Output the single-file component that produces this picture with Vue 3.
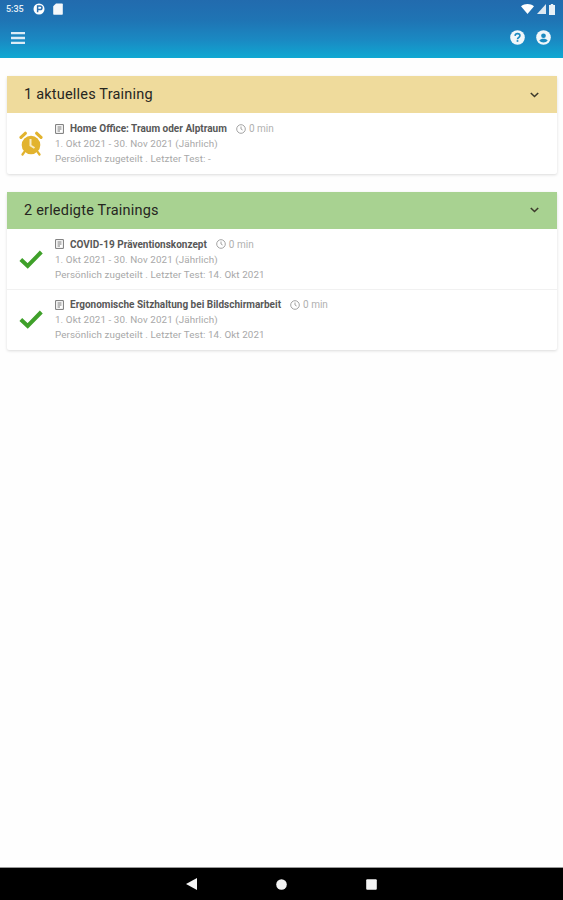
<template>
  <div class="screen">
    <header class="appbar">
      <div class="status">
        <div class="status-left">
          <span class="time">5:35</span>
          <svg class="st-icon" width="12" height="12" viewBox="0 0 12 12"><circle cx="6" cy="6" r="5.500" fill="#fff"/><path d="M4.600 9.200V3h2.600a1.700 1.700 0 0 1 0 3.600H5" fill="none" stroke="#2a70b0" stroke-width="1.500"/></svg>
          <svg class="st-icon" width="10" height="12" viewBox="0 0 10 12"><path d="M3 .5h6a.8.8 0 0 1 .8.8v9.600a.8.8 0 0 1-.8.8H1a.8.8 0 0 1-.8-.8V3.300z" fill="#f4f8fb"/></svg>
        </div>
        <div class="status-right">
          <svg width="13" height="10" viewBox="0 0 13 10"><path d="M0 2.200C3.600-.7 9.400-.7 13 2.200L6.500 10z" fill="#fff"/></svg>
          <svg width="9" height="10" viewBox="0 0 9 10"><path d="M9 0v10H0z" fill="#dfe9f2"/></svg>
          <svg width="6" height="11" viewBox="0 0 6 11"><path d="M1.800 0h2.400v1H6v10H0V1h1.800z" fill="#e9f1f7"/></svg>
        </div>
      </div>
      <div class="toolbar">
        <svg class="menu" width="14" height="12" viewBox="0 0 14 12"><path d="M0 1.200h14M0 6h14M0 10.800h14" stroke="#dcecf6" stroke-width="2.300"/></svg>
        <div class="actions">
          <svg width="15" height="15" viewBox="0 0 16 16">
            <circle cx="8" cy="8" r="7.800" fill="#f1f7fa"/>
            <path d="M5.400 6.200A2.600 2.600 0 0 1 8 3.900c1.500 0 2.600 1 2.600 2.200 0 1.900-2.600 1.900-2.600 3.700" fill="none" stroke="#1b8ac0" stroke-width="1.700"/>
            <rect x="7.100" y="10.800" width="1.800" height="1.800" fill="#1b8ac0"/>
          </svg>
          <svg width="15" height="15" viewBox="0 0 16 16">
            <circle cx="8" cy="8" r="7.800" fill="#f1f7fa"/>
            <circle cx="8" cy="6.100" r="2.500" fill="#1b8ac0"/>
            <path d="M3.500 11.200c1-1.500 2.600-2 4.500-2s3.500.5 4.500 2c-1 1.300-2.600 2-4.500 2s-3.500-.7-4.500-2z" fill="#1b8ac0"/>
          </svg>
        </div>
      </div>
    </header>

    <main class="content">
      <section v-for="group in groups" :key="group.title" class="card">
        <div class="card-head" :class="group.tone">
          <span>{{ group.title }}</span>
          <svg class="chevron" width="9" height="6" viewBox="0 0 9 6"><path d="M.8 1l3.700 3.500L8.200 1" fill="none" stroke="#3d3a2c" stroke-width="1.600"/></svg>
        </div>
        <div v-for="item in group.items" :key="item.name" class="row">
          <div class="status-icon">
            <svg v-if="group.tone === 'open'" width="24" height="25" viewBox="0 0 24 25">
              <circle cx="12" cy="14" r="9.300" fill="#e2b32e"/>
              <path d="M2 6.300 6.300 2.300M22 6.300l-4.300-4" stroke="#e2b32e" stroke-width="3.200" stroke-linecap="round"/>
              <path d="M5.300 21 3.500 23.500M18.700 21l1.800 2.500" stroke="#e2b32e" stroke-width="2.200" stroke-linecap="round"/>
              <path d="M11.500 8v6.500l4 2.500" fill="none" stroke="#f7ecc8" stroke-width="2"/>
            </svg>
            <svg v-else width="24" height="19" viewBox="0 0 24 19">
              <path d="M1.800 9.500 8.700 16 22.300 2" fill="none" stroke="#3fa02a" stroke-width="4"/>
            </svg>
          </div>
          <div class="details">
            <div class="title-line">
              <svg width="9" height="10" viewBox="0 0 9 10"><path d="M.6.600h7.800v8.800H.6zM2.500 3h4M2.500 5h4M2.500 7h2.500" fill="none" stroke="#777" stroke-width="1"/></svg>
              <strong>{{ item.name }}</strong>
              <span class="duration">
                <svg width="10" height="10" viewBox="0 0 10 10"><circle cx="5" cy="5" r="4.300" fill="none" stroke="#999" stroke-width=".9"/><path d="M5 2.500V5l1.600 1" fill="none" stroke="#999" stroke-width=".9"/></svg>
                0 min
              </span>
            </div>
            <div class="meta">1. Okt 2021 - 30. Nov 2021 (Jährlich)</div>
            <div class="meta">Persönlich zugeteilt . Letzter Test: {{ item.lastTest }}</div>
          </div>
        </div>
      </section>
    </main>

    <footer class="navbar">
      <svg width="11" height="12" viewBox="0 0 11 12"><path d="M11 0v12L0 6z" fill="#f4f4f4"/></svg>
      <svg width="11" height="11" viewBox="0 0 11 11"><circle cx="5.500" cy="5.500" r="5.300" fill="#f4f4f4"/></svg>
      <svg width="11" height="11" viewBox="0 0 11 11"><rect x=".2" y=".2" width="10.600" height="10.600" rx="1" fill="#f4f4f4"/></svg>
    </footer>
  </div>
</template>

<script setup>
const groups = [
  {
    title: '1 aktuelles Training',
    tone: 'open',
    items: [{ name: 'Home Office: Traum oder Alptraum', lastTest: '-' }]
  },
  {
    title: '2 erledigte Trainings',
    tone: 'done',
    items: [
      { name: 'COVID-19 Präventionskonzept', lastTest: '14. Okt 2021' },
      { name: 'Ergonomische Sitzhaltung bei Bildschirmarbeit', lastTest: '14. Okt 2021' }
    ]
  }
]
</script>

<style>
html, body { margin: 0; background: #fff; }
</style>

<style scoped>
.screen {
  width: 563px;
  height: 900px;
  display: flex;
  flex-direction: column;
  font-family: Roboto, "Liberation Sans", sans-serif;
  background: #fefefe;
  overflow: hidden;
}

.appbar {
  height: 58px;
  flex: none;
  box-sizing: border-box;
  background: linear-gradient(180deg, #226bae 0%, #1f74b4 35%, #1a8ac3 70%, #0fa8d2 100%);
}

.status {
  height: 18px;
  padding: 0 8px 0 6px;
  display: flex;
  justify-content: space-between;
  align-items: center;
}

.status-left, .status-right {
  display: flex;
  align-items: center;
}

.status-left { gap: 8px; }
.status-right { gap: 3px; }

.time {
  font-size: 9px;
  font-weight: 500;
  color: #e6f0f7;
  width: 19px;
}

.toolbar {
  height: 40px;
  padding: 0 12px 0 11px;
  display: flex;
  justify-content: space-between;
  align-items: center;
}

.menu { margin-bottom: 1px; }

.actions {
  display: flex;
  gap: 11px;
  margin-bottom: 1px;
}

.content {
  flex: 1;
  padding: 18px 6px 0 7px;
  display: flex;
  flex-direction: column;
  gap: 18px;
}

.card {
  background: #fff;
  border-radius: 2px;
  box-shadow: 0 1px 3px rgba(0, 0, 0, 0.14);
}

.card-head {
  height: 37px;
  padding: 0 18px 0 17px;
  display: flex;
  justify-content: space-between;
  align-items: center;
  font-size: 14.500px;
  letter-spacing: 0.2px;
  color: #26261f;
}

.card-head.open { background: #efdb9c; }
.card-head.done { background: #a8d291; }

.row {
  height: 60.500px;
  box-sizing: border-box;
  padding: 8px 0 0 12px;
  display: flex;
}

.row + .row {
  padding-top: 7px;
  border-top: 1px solid #f1f1f1;
}

.status-icon {
  width: 36px;
  height: 45px;
  flex: none;
  display: flex;
  align-items: center;
  justify-content: flex-start;
}

.details {
  font-size: 9.800px;
  line-height: 15px;
  color: #a8a8a8;
}

.title-line {
  display: flex;
  align-items: center;
  gap: 6px;
}

.title-line strong {
  font-size: 10px;
  font-weight: 700;
  color: #585858;
}

.duration {
  display: flex;
  align-items: center;
  gap: 3px;
  margin-left: 3px;
  font-size: 10px;
  color: #b0b0b0;
}

.meta { letter-spacing: 0.1px; }

.navbar {
  height: 33px;
  flex: none;
  background: #000;
  border-top: 1px solid #999;
  box-sizing: border-box;
  display: flex;
  justify-content: center;
  align-items: center;
  gap: 79px;
}
</style>
